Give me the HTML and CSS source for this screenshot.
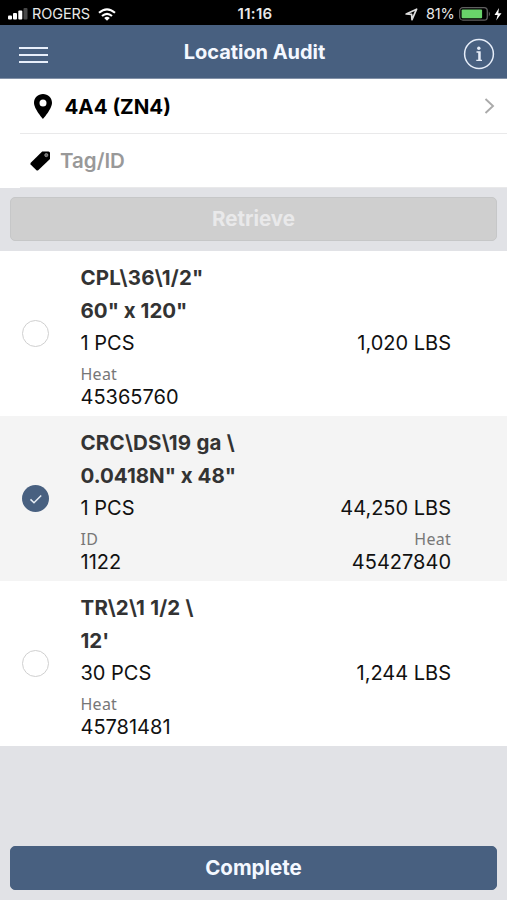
FILE: index.html
```html
<!DOCTYPE html>
<html lang="en">
<head>
<meta charset="utf-8">
<title>Location Audit</title>
<link rel="stylesheet" href="styles.css">
</head>
<body>
<div class="app">
  <div class="status">
    <div class="status-left">
      <svg class="signal" width="20" height="12" viewBox="0 0 20 12"><g fill="#fff"><rect x="0" y="7.5" width="4" height="4" rx="1"/><rect x="5" y="5" width="4" height="6.5" rx="1"/><rect x="10.3" y="2.5" width="4" height="9" rx="1"/></g><rect x="15.5" y="0" width="4" height="11.5" rx="1" fill="#484848"/></svg>
      <span class="carrier">ROGERS</span>
      <svg class="wifi" width="18" height="13" viewBox="0 0 18 13"><g fill="none" stroke="#fff" stroke-width="2.1"><path d="M1 4.8Q9-2.2 17 4.8"/><path d="M4 8Q9 3.6 14 8"/></g><path d="M9 12.7L6.2 9.9Q9 7.6 11.8 9.9Z" fill="#fff"/></svg>
    </div>
    <span class="clock">11:16</span>
    <div class="status-right">
      <svg class="arrow" width="13" height="13" viewBox="0 0 13 13"><path d="M1.2 6L11.6 1.2L7 11.6L6.6 6.4Z" fill="none" stroke="#ddd" stroke-width="1.7" stroke-linejoin="round"/></svg>
      <span class="percent">81%</span>
      <svg class="battery" width="32" height="14" viewBox="0 0 32 14"><rect x=".7" y=".7" width="27.6" height="12.4" rx="3.2" fill="none" stroke="#606060" stroke-width="1.3"/><rect x="2.6" y="2.6" width="20.5" height="8.6" rx="1" fill="#69d36a"/><path d="M29.8 4.5Q32.2 7 29.8 9.5Z" fill="#606060"/></svg>
      <svg class="bolt" width="8" height="13" viewBox="0 0 8 13"><path d="M5 0L.5 7H3.6L2.2 12.5L7.5 5.2H4.3Z" fill="#fff"/></svg>
    </div>
  </div>
  <header class="header">
    <div class="menu"><i></i><i></i><i></i></div>
    <h1 class="heading"><span>Location Audit</span></h1>
    <svg class="info" width="32" height="32" viewBox="0 0 32 32"><circle cx="16" cy="16" r="14.4" fill="none" stroke="#e6edf8" stroke-width="1.5"/><circle cx="15.8" cy="10.3" r="1.7" fill="#e6edf8"/><path d="M13.5 14H17V22M13.3 22.4H19" fill="none" stroke="#e6edf8" stroke-width="1.3"/><path d="M16.2 14V22" stroke="#e6edf8" stroke-width="2"/></svg>
  </header>
  <div class="fields">
    <div class="field">
      <svg class="pin" width="18" height="25" viewBox="0 0 18 25"><path fill-rule="evenodd" d="M9 0C4 0 0 3.8 0 8.8C0 15 9 25 9 25S18 15 18 8.8C18 3.8 14 0 9 0ZM9 5.4A3.5 3.5 0 1 1 9 12.4A3.5 3.5 0 1 1 9 5.4Z"/></svg>
      <span class="location">4A4 (ZN4)</span>
      <svg class="chevron" width="11" height="16" viewBox="0 0 11 16"><path d="M1.5 1L9 8L1.5 15" fill="none" stroke="#aaa" stroke-width="1.9"/></svg>
    </div>
    <div class="field">
      <svg class="tag" width="21" height="20" viewBox="0 0 21 20"><path d="M12.2.5H18.5Q20 .5 20 2V8L8.2 19.2Q7.2 20 6.2 19L.6 13.4Q0 12.5 1 11.5Z"/><circle cx="16.3" cy="4.1" r="1.6" fill="#666" stroke="#bbb" stroke-width=".6"/></svg>
      <span class="placeholder">Tag/ID</span>
    </div>
  </div>
  <div class="retrieve-bar"><button class="button disabled"><span>Retrieve</span></button></div>
  <main class="list">
    <section class="item">
      <span class="radio"></span>
      <div class="details">
        <div class="title"><span class="code">CPL\36\1/2"</span><br><span>60" x 120"</span></div>
        <div class="line"><span>1 PCS</span><span>1,020 LBS</span></div>
        <div class="line labels"><span>Heat</span></div>
        <div class="line values"><span>45365760</span></div>
      </div>
    </section>
    <section class="item selected">
      <span class="radio checked"><svg width="26" height="26" viewBox="0 0 26 26"><path d="M7.5 13.4L11 16.8L18.2 9.5" fill="none" stroke="#e9eef5" stroke-width="1.5"/></svg></span>
      <div class="details">
        <div class="title"><span class="code">CRC\DS\19 ga \</span><br><span>0.0418N" x 48"</span></div>
        <div class="line"><span>1 PCS</span><span>44,250 LBS</span></div>
        <div class="line labels"><span>ID</span><span>Heat</span></div>
        <div class="line values"><span>1122</span><span>45427840</span></div>
      </div>
    </section>
    <section class="item">
      <span class="radio"></span>
      <div class="details">
        <div class="title"><span class="code">TR\2\1 1/2 \</span><br><span>12'</span></div>
        <div class="line"><span>30 PCS</span><span>1,244 LBS</span></div>
        <div class="line labels"><span>Heat</span></div>
        <div class="line values"><span>45781481</span></div>
      </div>
    </section>
  </main>
  <footer class="footer"><button class="button"><span>Complete</span></button></footer>
</div>
</body>
</html>
```
FILE: styles.css
```css
* { box-sizing: border-box; }
body { margin: 0; font-family: Inter, "Liberation Sans", sans-serif; color: #111; }
svg { display: block; flex: none; }
.app { width: 507px; height: 900px; display: flex; flex-direction: column; background: #e1e2e6; overflow: hidden; }
.status { height: 25px; flex: none; display: grid; grid-template-columns: 1fr auto 1fr; align-items: center; background: #000; color: #e8e8e8; padding: 2px 5px 0 8px; font-size: 14.5px; line-height: 24px; }
.status-left, .status-right { display: flex; align-items: center; }
.status-right { justify-content: flex-end; }
.carrier { margin-left: 4px; width: 59px; letter-spacing: -.1px; }
.wifi { margin-left: 7px; }
.clock { font-size: 15px; font-weight: 600; letter-spacing: .3px; }
.percent { margin-left: 8px; width: 29px; letter-spacing: -.2px; }
.battery { margin-left: 4px; }
.bolt { margin-left: 3px; }
.header { height: 54px; flex: none; display: flex; align-items: center; justify-content: space-between; background: #486080; border-bottom: 1px solid #8291a7; padding: 0 12px 0 19px; }
.menu { width: 29px; display: flex; flex-direction: column; gap: 5px; padding-top: 6px; }
.menu i { height: 2px; background: #e8effb; }
.heading { margin: 0; font-size: 20px; line-height: 30px; font-weight: 700; color: #f4f8ff; letter-spacing: -.05px; transform: translateX(-1px); }
.info { margin-top: 4px; }
.fields { height: 109px; flex: none; background: #fff; padding-left: 20px; }
.field { height: 54.5px; display: flex; align-items: center; border-bottom: 1px solid #e9e9ea; padding: 1px 12px 0 0; font-size: 20.5px; font-weight: 600; }
.pin { margin-left: 13.5px; }
.location { margin-left: 13px; color: #000; flex: 1; font-weight: 700; }
.tag { margin-left: 10px; }
.placeholder { margin-left: 9px; color: #999; }
.retrieve-bar { height: 63px; flex: none; padding: 9px 10px; }
.button { display: block; width: 100%; height: 44px; border: 1px solid #486080; border-radius: 5px; background: #486080; color: #f4f8ff; font: 700 20.5px/42px Inter, sans-serif; padding: 0; }
.button.disabled { background: #cfcfcf; border-color: #c6c7c8; color: #e9e9ea; }
.list { flex: none; }
.item { height: 165px; display: flex; align-items: center; background: #fff; padding: 0 56px 0 22px; }
.item.selected { background: #f4f4f4; }
.radio { width: 27px; height: 27px; flex: none; border: 1.5px solid #d0d0d0; border-radius: 50%; background: #fff; }
.radio.checked { display: flex; align-items: center; justify-content: center; background: #486080; border: 0; }
.details { flex: 1; margin-left: 31.5px; height: 165px; padding-top: 10px; }
.title { font-size: 20.5px; line-height: 33px; font-weight: 650; color: #333; }
.code { letter-spacing: .2px; }
.line { display: flex; justify-content: space-between; font-size: 20px; line-height: 33px; }
.labels { font-family: "Noto Sans", sans-serif; font-size: 16px; line-height: 25px; color: #777; padding-top: 2px; letter-spacing: .25px; }
.values { line-height: 21px; }
.footer { margin-top: auto; padding: 0 10px 10px; }
```
